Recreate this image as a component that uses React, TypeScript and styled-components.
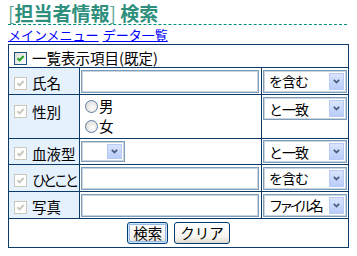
import styled, { createGlobalStyle } from 'styled-components'

const Global = createGlobalStyle`
  body {
    margin: 0 8px;
    background: #fff;
    font-family: "Noto Sans CJK JP", "Noto Sans", sans-serif;
    font-size: 14.5px;
    color: #000;
  }
`

const Title = styled.h1`
  margin: 0 -8px 0 0;
  padding-top: 1px;
  height: 23px;
  line-height: 23px;
  font-size: 19px;
  font-weight: bold;
  color: #2e8f7c;
  border-bottom: 1px dashed #00917c;
  white-space: nowrap;
`

const Bracket = styled.span`
  font-weight: normal;
  color: #5aa596;
`

const Nav = styled.div`
  height: 19px;
  line-height: 20px;
  font-size: 13px;
  display: flex;
  gap: 4px;
`

const NavLink = styled.a`
  color: #0000ff;
  text-decoration: underline;
`

const Table = styled.table`
  border-collapse: collapse;
  table-layout: fixed;
  width: 341px;
  border: 1px solid #0b3a6b;
  font-size: 14.5px;
  td {
    border: 1px solid #0b3a6b;
    padding: 0;
  }
`

const Row = styled.tr<{ $h: number }>`
  height: ${p => p.$h}px;
`

const LabelCell = styled.td<{ $top?: boolean }>`
  background: #e5f1fd;
  vertical-align: ${p => (p.$top ? 'top' : 'middle')};
  padding: ${p => (p.$top ? '4px 0 0 5px' : '0 0 0 5px')} !important;
  white-space: nowrap;
`

const FieldCell = styled.td<{ $top?: boolean }>`
  vertical-align: ${p => (p.$top ? 'top' : 'middle')};
  padding: ${p => (p.$top ? '2px 1px 0' : '0 1px')} !important;
`

const HeadCell = styled.td`
  padding: 0 0 0 5px !important;
  vertical-align: middle;
`

const ButtonCell = styled.td`
  text-align: center;
  vertical-align: middle;
`

const Label = styled.span`
  display: inline-flex;
  align-items: center;
  gap: 5px;
  line-height: 16px;
`

const LabelText = styled.span<{ $tight?: boolean }>`
  letter-spacing: ${p => (p.$tight ? '-3.4px' : '0')};
`

const Box = styled.span<{ $disabled?: boolean }>`
  display: inline-flex;
  align-items: center;
  justify-content: center;
  width: 13px;
  height: 13px;
  box-sizing: border-box;
  border: 1px solid ${p => (p.$disabled ? '#c9c7ba' : '#1c5180')};
  background: ${p => (p.$disabled ? '#fff' : 'linear-gradient(135deg, #dcdcd7, #fdfdfc)')};
  flex: none;
`

const Checkbox = ({ disabled }: { disabled?: boolean }) => (
  <Box $disabled={disabled}>
    <svg width="9" height="9" viewBox="0 0 9 9">
      <path
        d="M1.5 4.2 L3.6 6.4 L7.6 2"
        fill="none"
        stroke={disabled ? '#c9c7ba' : '#21a121'}
        strokeWidth="2"
      />
    </svg>
  </Box>
)

const TextInput = styled.div<{ $w: number }>`
  width: ${p => p.$w}px;
  height: 23px;
  box-sizing: border-box;
  border: 1px solid #7f9db9;
  box-shadow: inset 0 0 0 1px #c8d4e0;
  background: #fff;
`

const Select = styled.div<{ $w: number; $h?: number }>`
  width: ${p => p.$w}px;
  height: ${p => p.$h ?? 23}px;
  box-sizing: border-box;
  border: 1px solid #7f9db9;
  box-shadow: inset 0 0 0 1px #c8d4e0;
  background: #fff;
  display: flex;
  align-items: center;
  justify-content: space-between;
  padding: 2px;
  font-size: 14px;
`

const SelText = styled.span<{ $tight?: boolean }>`
  padding-left: 3px;
  white-space: nowrap;
  letter-spacing: ${p => (p.$tight ? '-3.8px' : '-1px')};
`

const SelButton = styled.span`
  width: 15px;
  align-self: stretch;
  box-sizing: border-box;
  border: 1px solid #b8caf5;
  background: linear-gradient(#d9e4fd, #b9cdf9);
  display: flex;
  align-items: center;
  justify-content: center;
  flex: none;
`

const Chevron = () => (
  <svg width="7" height="5" viewBox="0 0 7 5">
    <path d="M0.8 0.8 L3.5 3.5 L6.2 0.8" fill="none" stroke="#4d6185" strokeWidth="1.8" />
  </svg>
)

const DropDown = ({ w, h, text, tight }: { w: number; h?: number; text?: string; tight?: boolean }) => (
  <Select $w={w} $h={h}>
    <SelText $tight={tight}>{text}</SelText>
    <SelButton>
      <Chevron />
    </SelButton>
  </Select>
)

const Radios = styled.div`
  display: flex;
  flex-direction: column;
  gap: 4px;
  padding: 1px 0 0 4px;
`

const RadioLabel = styled.span`
  display: flex;
  align-items: center;
  gap: 1px;
  line-height: 16px;
`

const Radio = styled.span`
  width: 13px;
  height: 13px;
  box-sizing: border-box;
  border-radius: 50%;
  border: 1px solid #5e7ea6;
  background: radial-gradient(circle at 60% 60%, #fefefe, #d6d3cb);
`

const Button = styled.button<{ $default?: boolean }>`
  font-family: inherit;
  font-size: 14.5px;
  height: 22px;
  padding: 0 5px;
  margin: 0 3px;
  line-height: 18px;
  border: 1px solid #003c74;
  border-radius: 3px;
  background: linear-gradient(#ffffff, #f5f4ef 70%, #dedbcf);
  box-shadow: ${p => (p.$default ? 'inset 0 0 0 1px #cee7ff, inset 0 0 0 2px #98b8ea' : 'none')};
  color: #000;
`

const rows = [
  { label: 'ひとこと', match: 'を含む', tight: true },
  { label: '写真', match: 'ファイル名', tight: false },
]

export default function App() {
  return (
    <>
      <Global />
      <Title>
        <Bracket>[</Bracket>担当者情報<Bracket>]</Bracket> 検索
      </Title>
      <Nav>
        <NavLink href="#">メインメニュー</NavLink>
        <NavLink href="#">データ一覧</NavLink>
      </Nav>
      <Table>
        <colgroup>
          <col style={{ width: 71 }} />
          <col style={{ width: 182 }} />
          <col />
        </colgroup>
        <tbody>
          <Row $h={23}>
            <HeadCell colSpan={3}>
              <Label>
                <Checkbox />
                一覧表示項目(既定)
              </Label>
            </HeadCell>
          </Row>
          <Row $h={27}>
            <LabelCell>
              <Label>
                <Checkbox disabled />
                <LabelText>氏名</LabelText>
              </Label>
            </LabelCell>
            <FieldCell>
              <TextInput $w={178} />
            </FieldCell>
            <FieldCell>
              <DropDown w={84} text="を含む" />
            </FieldCell>
          </Row>
          <Row $h={44}>
            <LabelCell $top>
              <Label>
                <Checkbox disabled />
                <LabelText>性別</LabelText>
              </Label>
            </LabelCell>
            <FieldCell $top>
              <Radios>
                <RadioLabel>
                  <Radio />男
                </RadioLabel>
                <RadioLabel>
                  <Radio />女
                </RadioLabel>
              </Radios>
            </FieldCell>
            <FieldCell $top>
              <DropDown w={84} text="と一致" />
            </FieldCell>
          </Row>
          <Row $h={26}>
            <LabelCell>
              <Label>
                <Checkbox disabled />
                <LabelText>血液型</LabelText>
              </Label>
            </LabelCell>
            <FieldCell>
              <DropDown w={44} h={21} />
            </FieldCell>
            <FieldCell>
              <DropDown w={84} text="と一致" />
            </FieldCell>
          </Row>
          {rows.map(r => (
            <Row $h={27} key={r.label}>
              <LabelCell>
                <Label>
                  <Checkbox disabled />
                  <LabelText $tight={r.tight}>{r.label}</LabelText>
                </Label>
              </LabelCell>
              <FieldCell>
                <TextInput $w={178} />
              </FieldCell>
              <FieldCell>
                <DropDown w={84} text={r.match} tight={r.match === 'ファイル名'} />
              </FieldCell>
            </Row>
          ))}
          <Row $h={29}>
            <ButtonCell colSpan={3}>
              <Button $default>検索</Button>
              <Button>クリア</Button>
            </ButtonCell>
          </Row>
        </tbody>
      </Table>
    </>
  )
}
